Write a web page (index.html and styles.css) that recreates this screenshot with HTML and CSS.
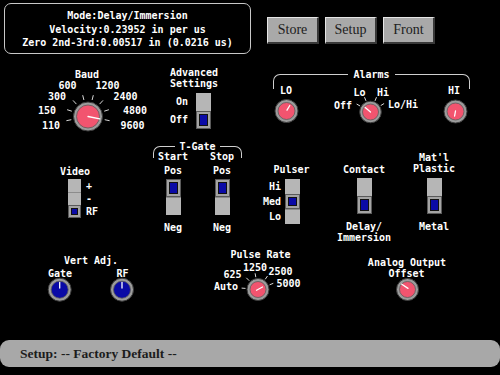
FILE: index.html
```html
<!DOCTYPE html>
<html lang="en">
<head>
  <meta charset="UTF-8">
  <title>Setup</title>
  <link rel="stylesheet" href="styles.css">
</head>
<body>
  <div class="screen">
    <div class="header">
      <div class="readout">
        <div>Mode:Delay/Immersion</div>
        <div>Velocity:0.23952 in per us</div>
        <div>Zero 2nd-3rd:0.00517 in (0.0216 us)</div>
      </div>
      <div class="buttons">
        <button class="btn">Store</button>
        <button class="btn">Setup</button>
        <button class="btn">Front</button>
      </div>
    </div>

    <div class="panel">
      <!-- baud dial -->
      <svg class="dial baud" viewBox="30 66 130 70">
        <text x="87" y="74">Baud</text>
        <text x="67.5" y="85">600</text>
        <text x="107.5" y="85">1200</text>
        <text x="57" y="96">300</text>
        <text x="125.5" y="96">2400</text>
        <text x="47" y="110">150</text>
        <text x="135" y="110">4800</text>
        <text x="51" y="125">110</text>
        <text x="132.5" y="125">9600</text>
        <line class="tick" x1="71.3" y1="119.7" x2="66.4" y2="120.7"/>
        <line class="tick" x1="71.8" y1="111.2" x2="67.1" y2="109.7"/>
        <line class="tick" x1="76.4" y1="104.1" x2="73" y2="100.4"/>
        <line class="tick" x1="83.9" y1="100" x2="82.7" y2="95.2"/>
        <line class="tick" x1="92.1" y1="100" x2="93.3" y2="95.2"/>
        <line class="tick" x1="99.6" y1="104.1" x2="103" y2="100.4"/>
        <line class="tick" x1="104.2" y1="111.2" x2="108.9" y2="109.7"/>
        <line class="tick" x1="104.7" y1="119.7" x2="109.6" y2="120.7"/>
        <circle class="ring" cx="88" cy="116.5" r="14.5"/>
        <circle class="face" cx="88" cy="116.5" r="11.5"/>
        <line class="needle" x1="88" y1="116.5" x2="99.8" y2="118.8"/>
      </svg>

      <div class="grp adv">
        <div class="title">Advanced<br>Settings</div>
        <div class="row">
          <div class="opts">
            <span>On</span>
            <span>Off</span>
          </div>
          <div class="switch">
            <div class="cell"></div>
            <div class="cell on"><div class="dot"></div></div>
          </div>
        </div>
      </div>

      <!-- alarms -->
      <div class="grp alarms">
        <div class="bracket">
          <div class="leg left"></div>
          <div class="rule"></div>
          <div class="name">Alarms</div>
          <div class="rule"></div>
          <div class="leg right"></div>
        </div>
      </div>
      <svg class="dial alarm" viewBox="273 82 197 45">
        <text x="286" y="90">LO</text>
        <circle class="ring" cx="286.5" cy="111" r="11.5"/>
        <circle class="face" cx="286.5" cy="111" r="8.5"/>
        <line class="needle" x1="287" y1="110.2" x2="289.8" y2="105.5"/>

        <text x="343" y="105">Off</text>
        <text x="359.5" y="92">Lo</text>
        <text x="383" y="92">Hi</text>
        <text x="403" y="104">Lo/Hi</text>
        <line class="tick" x1="360.1" y1="106" x2="356.6" y2="104"/>
        <line class="tick" x1="366" y1="100.9" x2="364.5" y2="97.2"/>
        <line class="tick" x1="375" y1="100.9" x2="376.5" y2="97.2"/>
        <line class="tick" x1="380.7" y1="105.6" x2="384.1" y2="103.5"/>
        <circle class="ring" cx="370.5" cy="112" r="10.8"/>
        <circle class="face" cx="370.5" cy="112" r="8"/>
        <line class="needle" x1="370.5" y1="112" x2="365.2" y2="107.5"/>

        <text x="454" y="90">HI</text>
        <circle class="ring" cx="455.5" cy="111.5" r="11.5"/>
        <circle class="face" cx="455.5" cy="111.5" r="8.5"/>
        <line class="needle" x1="455.5" y1="111" x2="454.6" y2="116"/>
      </svg>

      <!-- t-gate -->
      <div class="grp tgate">
        <div class="bracket">
          <div class="leg left short"></div>
          <div class="rule"></div>
          <div class="name">T-Gate</div>
          <div class="rule"></div>
          <div class="leg right short"></div>
        </div>
        <div class="tcols">
          <div class="tcol">
            <span>Start</span>
            <span class="pos">Pos</span>
            <div class="switch">
              <div class="cell on"><div class="dot"></div></div>
              <div class="cell"></div>
            </div>
            <span class="neg">Neg</span>
          </div>
          <div class="tcol">
            <span>Stop</span>
            <span class="pos">Pos</span>
            <div class="switch">
              <div class="cell on"><div class="dot"></div></div>
              <div class="cell"></div>
            </div>
            <span class="neg">Neg</span>
          </div>
        </div>
      </div>

      <div class="grp video">
        <div class="title">Video</div>
        <div class="row">
          <div class="switch small">
            <div class="cell"></div>
            <div class="cell"></div>
            <div class="cell on"><div class="dot"></div></div>
          </div>
          <div class="opts small">
            <span>+</span>
            <span>-</span>
            <span>RF</span>
          </div>
        </div>
      </div>

      <div class="grp pulser">
        <div class="title">Pulser</div>
        <div class="row">
          <div class="opts mid">
            <span>Hi</span>
            <span>Med</span>
            <span>Lo</span>
          </div>
          <div class="switch mid">
            <div class="cell"></div>
            <div class="cell on"><div class="dot"></div></div>
            <div class="cell"></div>
          </div>
        </div>
      </div>

      <div class="grp stack contact">
        <div class="title">Contact</div>
        <div class="switch">
          <div class="cell"></div>
          <div class="cell on"><div class="dot"></div></div>
        </div>
        <div class="below">Delay/<br>Immersion</div>
      </div>

      <div class="grp stack matl">
        <div class="title">Mat'l<br>Plastic</div>
        <div class="switch">
          <div class="cell"></div>
          <div class="cell on"><div class="dot"></div></div>
        </div>
        <div class="below">Metal</div>
      </div>

      <!-- vertical adjust -->
      <svg class="dial vert" viewBox="40 253 100 52">
        <text x="91" y="260">Vert Adj.</text>
        <text x="60" y="273">Gate</text>
        <text x="122.5" y="273">RF</text>
        <circle class="ring" cx="59.7" cy="289.7" r="11.5"/>
        <circle class="face blue" cx="59.7" cy="289.7" r="8.5"/>
        <line class="needle" x1="59.7" y1="288" x2="59.7" y2="282.5"/>
        <circle class="ring" cx="122" cy="289.7" r="11.5"/>
        <circle class="face blue" cx="122" cy="289.7" r="8.5"/>
        <line class="needle" x1="122" y1="288" x2="122" y2="282.5"/>
      </svg>

      <!-- pulse rate -->
      <svg class="dial pulse" viewBox="205 246 105 60">
        <text x="260.5" y="254">Pulse Rate</text>
        <text x="232.5" y="274">625</text>
        <text x="255" y="267">1250</text>
        <text x="280.5" y="271">2500</text>
        <text x="226" y="286">Auto</text>
        <text x="288.5" y="283.5">5000</text>
        <line class="tick" x1="245.5" y1="288.4" x2="241.6" y2="288.1"/>
        <line class="tick" x1="249.2" y1="280.7" x2="246.3" y2="277.8"/>
        <line class="tick" x1="255.8" y1="277.2" x2="255.1" y2="273.3"/>
        <line class="tick" x1="265.2" y1="279.3" x2="267.5" y2="276"/>
        <line class="tick" x1="269.6" y1="284.8" x2="273.3" y2="283.3"/>
        <circle class="ring" cx="258" cy="289.5" r="11"/>
        <circle class="face" cx="258" cy="289.5" r="8"/>
        <line class="needle" x1="256.5" y1="290.3" x2="262.5" y2="287"/>
      </svg>

      <!-- analog output -->
      <svg class="dial analog" viewBox="360 255 95 50">
        <text x="407" y="262">Analog Output</text>
        <text x="406.5" y="273">Offset</text>
        <circle class="ring" cx="407.5" cy="289.5" r="11"/>
        <circle class="face" cx="407.5" cy="289.5" r="8"/>
        <line class="needle" x1="401.8" y1="284.2" x2="408" y2="288.4"/>
      </svg>
    </div>

    <div class="status">Setup: -- Factory Default --</div>
  </div>
</body>
</html>
```

FILE: styles.css
```css
body {
  margin: 0;
  background: #000;
  font-family: "DejaVu Sans Mono", "Liberation Mono", monospace;
}
.screen {
  width: 500px;
  height: 375px;
  display: flex;
  flex-direction: column;
  padding-top: 3px;
  box-sizing: border-box;
}
.header {
  display: flex;
  height: 51px;
  padding-left: 4px;
}
.readout {
  width: 247px;
  height: 51px;
  box-sizing: border-box;
  border: 1px solid #c8c8c8;
  border-radius: 7px;
  padding-top: 5px;
  color: #fff;
  font-weight: bold;
  font-size: 10px;
  line-height: 13.5px;
  text-align: center;
  white-space: nowrap;
}
.buttons {
  display: flex;
  align-items: flex-start;
  gap: 6px;
  margin: 14px 0 0 16px;
}
.btn {
  width: 52px;
  height: 27px;
  padding: 0;
  background: #a9a9a9;
  border-style: solid;
  border-width: 1px 2px 2px 1px;
  border-color: #e6e6e6 #383838 #383838 #e6e6e6;
  font: 14px "Liberation Serif", serif;
  color: #202020;
}
.panel {
  position: relative;
  height: 283px;
  margin-top: 3px;
}
.status {
  height: 27px;
  display: flex;
  align-items: center;
  padding-left: 20px;
  background: #a8a8a8;
  border-radius: 9px;
  font: bold 13.5px "Liberation Serif", serif;
  color: #1c1c1c;
}

/* control groups */
.grp {
  position: absolute;
  color: #fff;
  font-weight: bold;
  font-size: 10px;
  line-height: 11px;
}
.grp .title {
  text-align: center;
}
.row {
  display: flex;
}
.opts {
  display: flex;
  flex-direction: column;
}
.opts span {
  height: 18px;
  line-height: 18px;
}
.opts.small span {
  height: 13px;
  line-height: 13px;
}
.opts.mid span {
  height: 15px;
  line-height: 15px;
}

.switch {
  display: flex;
  flex-direction: column;
  width: 15px;
}
.cell {
  height: 18px;
  background: #b6b6b6;
  box-sizing: border-box;
}
.cell + .cell {
  border-top: 1px solid #8c8c8c;
}
.cell.on {
  display: flex;
  padding: 2px;
  background: #a4a4a4;
  border: 1px solid #5a5a5a;
}
.cell.on .dot {
  flex: 1;
  background: #0a0aa6;
  border: 1px solid #111;
}
.switch.small {
  width: 13px;
}
.switch.small .cell {
  height: 13px;
}
.switch.mid .cell {
  height: 15px;
}

.adv {
  left: 164px;
  top: 10px;
  width: 60px;
}
.adv .row {
  gap: 8px;
  margin-top: 4px;
}
.adv .opts {
  width: 24px;
  text-align: right;
}

.video {
  left: 50px;
  top: 109px;
  width: 50px;
}
.video .row {
  gap: 5px;
  margin-top: 2px;
  padding-left: 18px;
}

.pulser {
  left: 258px;
  top: 107px;
  width: 67px;
}
.pulser .row {
  gap: 4px;
  margin-top: 4px;
}
.pulser .opts {
  width: 23px;
  text-align: right;
}

.stack {
  display: flex;
  flex-direction: column;
  align-items: center;
  width: 60px;
  text-align: center;
}
.stack .switch {
  margin-top: 3px;
}
.stack .below {
  margin-top: 7px;
}
.contact {
  left: 334px;
  top: 107px;
}
.matl {
  left: 404px;
  top: 95px;
}
.matl .switch {
  margin-top: 4px;
}

/* bracketed headings */
.bracket {
  display: flex;
  align-items: flex-start;
}
.bracket .rule {
  flex: 1;
  margin-top: 5px;
  border-top: 1px solid #cfcfcf;
}
.bracket .name {
  padding: 0 5px;
}
.bracket .leg {
  width: 7px;
  height: 14px;
  margin-top: 5px;
  border-top: 1px solid #cfcfcf;
}
.bracket .leg.left {
  border-left: 1px solid #cfcfcf;
  border-top-left-radius: 7px;
}
.bracket .leg.right {
  border-right: 1px solid #cfcfcf;
  border-top-right-radius: 7px;
}
.bracket .leg.short {
  height: 11px;
}
.alarms {
  left: 273px;
  top: 12px;
  width: 197px;
}
.tgate {
  left: 153px;
  top: 84px;
  width: 89px;
}
.tgate .name {
  padding: 0 4px;
}
.tcols {
  display: flex;
  gap: 9px;
  margin-top: -7px;
}
.tcol {
  width: 40px;
  display: flex;
  flex-direction: column;
  align-items: center;
}
.tcol .pos {
  margin: 3px 0;
}
.tcol .neg {
  margin-top: 7px;
}

/* dials */
.dial {
  position: absolute;
}
.dial text {
  fill: #fff;
  font: bold 10px "DejaVu Sans Mono", monospace;
  text-anchor: middle;
  dominant-baseline: central;
}
.dial .tick {
  stroke: #d8d8d8;
  stroke-width: 1;
}
.dial .ring {
  fill: #9c9c9c;
  stroke: #3a3a3a;
  stroke-width: 1;
}
.dial .face {
  fill: #f2546f;
  stroke: #5c5c5c;
  stroke-width: 0.8;
}
.dial .face.blue {
  fill: #0a0aa6;
}
.dial .needle {
  stroke: #fff;
  stroke-width: 1.3;
  stroke-linecap: round;
}
.baud {
  left: 30px;
  top: 9px;
  width: 130px;
  height: 70px;
}
.alarm {
  left: 273px;
  top: 25px;
  width: 197px;
  height: 45px;
}
.vert {
  left: 40px;
  top: 196px;
  width: 100px;
  height: 52px;
}
.pulse {
  left: 205px;
  top: 189px;
  width: 105px;
  height: 60px;
}
.analog {
  left: 360px;
  top: 198px;
  width: 95px;
  height: 50px;
}
```
